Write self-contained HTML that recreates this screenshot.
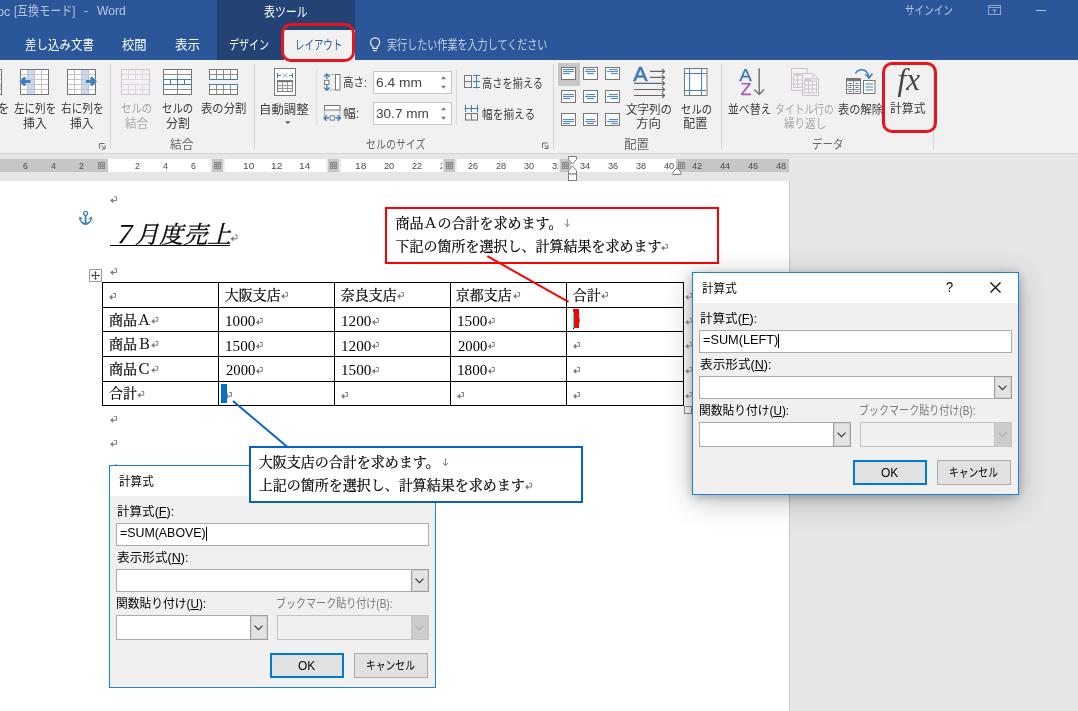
<!DOCTYPE html>
<html lang="ja">
<head>
<meta charset="utf-8">
<title>Word - 計算式</title>
<style>
html,body{margin:0;padding:0;}
body{will-change:transform;width:1078px;height:711px;overflow:hidden;position:relative;background:#e6e6e6;
 font-family:"Liberation Sans","Noto Sans CJK JP",sans-serif;font-size:12px;color:#262626;}
.a{position:absolute;}
.t{position:absolute;white-space:nowrap;line-height:20px;height:20px;}
.t span{display:inline-block;transform-origin:0 50%;}
.t u{text-decoration:underline;text-underline-offset:1px;}
svg{position:absolute;overflow:visible;}
#title{left:0;top:0;width:1078px;height:60px;background:#2b579a;}
#ctx{left:217px;top:0;width:138px;height:60px;background:#234375;}
#tabsel{left:284px;top:30px;width:71px;height:30px;background:#f1f1f1;}
.redbox{position:absolute;border:3px solid #e8141e;box-sizing:border-box;}
#ribbon{left:0;top:60px;width:1078px;height:93px;background:#f1f1f1;border-bottom:1px solid #d6d6d6;}
.sep{position:absolute;width:1px;background:#d4d4d4;top:64px;height:85px;}
.sep2{position:absolute;width:1px;background:#dadada;top:70px;height:55px;}
.inp{position:absolute;background:#fff;border:1px solid #c6c6c6;box-sizing:border-box;}
#ruler{left:0;top:159px;width:789px;height:13px;background:#fff;}
.rg{position:absolute;top:0;height:13px;background:#c6c6c6;}
.rm{position:absolute;top:0;width:15px;height:13px;background:#e9e9e9;}
.rm i{position:absolute;left:2px;top:0;width:11px;height:13px;background:#c6c6c6;}
#page{left:0;top:181px;width:789px;height:530px;background:#fff;border-right:1px solid #c8c8c8;}
.doc{font-family:"Liberation Serif","Noto Serif CJK JP","Noto Serif CJK SC",serif;-webkit-text-stroke:.22px #000;}
.hl{position:absolute;height:1px;background:#000;}
.vl{position:absolute;width:1px;background:#000;}
.dlg{position:absolute;background:#f0f0f0;border:1px solid #1883d7;box-sizing:border-box;width:327px;height:223px;}
.sh{box-shadow:0 2px 9px rgba(0,0,0,.24),0 6px 28px rgba(0,0,0,.24);}
.dlg div{position:absolute;box-sizing:border-box;}
.dlg .tb{left:0;top:0;right:0;height:30px;background:#fff;}
.dlg .in{background:#fff;border:1px solid #ababab;}
.dlg .dis{border-color:#c4c4c4;background:#f0f0f0;}
.dlg .ddb{right:0;top:0;bottom:0;width:18px;border:1px solid #a0a0a0;margin:-1px;background:#e3e3e3;box-shadow:inset 0 0 0 1px #d4d4d4;}
.dlg .dis .ddb{border-color:#c4c4c4;background:#cccccc;box-shadow:none;}
.dlg .btn{background:#e1e1e1;border:1px solid #adadad;}
.dlg .ok{border:2px solid #0078d7;}
.callout{position:absolute;background:#fff;box-sizing:border-box;}
</style>
</head>
<body>
<div id="title" class="a"></div><div id="ctx" class="a"></div><div id="tabsel" class="a"></div>
<div id="ribbon" class="a"></div>
<div class="sep" style="left:110px"></div>
<div class="sep" style="left:254px"></div>
<div class="sep" style="left:553px"></div>
<div class="sep" style="left:721px"></div>
<div class="sep" style="left:933px"></div>
<div class="sep2" style="left:316px"></div>
<div class="sep2" style="left:456px"></div>
<div class="inp" style="left:373px;top:71px;width:79px;height:23px;"></div>
<div class="inp" style="left:373px;top:102px;width:79px;height:23px;"></div>
<svg class="a" style="left:0;top:0" width="1078" height="160" viewBox="0 0 1078 160"><rect x="-26.5" y="69.5" width="28" height="25" fill="#fff" stroke="none" stroke-width="1" /><rect x="-26.5" y="84.5" width="28" height="5" fill="#c5d9f0" stroke="none" stroke-width="1" /><line x1="-26.5" y1="74.5" x2="1.5" y2="74.5" stroke="#c3c3c3" stroke-width="1" /><line x1="-26.5" y1="79.5" x2="1.5" y2="79.5" stroke="#c3c3c3" stroke-width="1" /><line x1="-26.5" y1="84.5" x2="1.5" y2="84.5" stroke="#c3c3c3" stroke-width="1" /><line x1="-26.5" y1="89.5" x2="1.5" y2="89.5" stroke="#c3c3c3" stroke-width="1" /><line x1="-19.5" y1="69.5" x2="-19.5" y2="94.5" stroke="#c3c3c3" stroke-width="1" /><line x1="-12.5" y1="69.5" x2="-12.5" y2="94.5" stroke="#c3c3c3" stroke-width="1" /><line x1="-5.5" y1="69.5" x2="-5.5" y2="94.5" stroke="#c3c3c3" stroke-width="1" /><rect x="-26.5" y="69.5" width="28" height="25" fill="none" stroke="#747474" stroke-width="1" /><rect x="20.5" y="69.5" width="28" height="25" fill="#fff" stroke="none" stroke-width="1" /><rect x="27.5" y="69.5" width="7" height="25" fill="#c5d9f0" stroke="none" stroke-width="1" /><line x1="20.5" y1="74.5" x2="48.5" y2="74.5" stroke="#c3c3c3" stroke-width="1" /><line x1="20.5" y1="79.5" x2="48.5" y2="79.5" stroke="#c3c3c3" stroke-width="1" /><line x1="20.5" y1="84.5" x2="48.5" y2="84.5" stroke="#c3c3c3" stroke-width="1" /><line x1="20.5" y1="89.5" x2="48.5" y2="89.5" stroke="#c3c3c3" stroke-width="1" /><line x1="27.5" y1="69.5" x2="27.5" y2="94.5" stroke="#c3c3c3" stroke-width="1" /><line x1="34.5" y1="69.5" x2="34.5" y2="94.5" stroke="#c3c3c3" stroke-width="1" /><line x1="41.5" y1="69.5" x2="41.5" y2="94.5" stroke="#c3c3c3" stroke-width="1" /><rect x="20.5" y="69.5" width="28" height="25" fill="none" stroke="#747474" stroke-width="1" /><path d="M19.2 81.4 l5 -4.8 l2.2 2 l-1.500 1.100 h5.7 v3.400 h-5.7 l1.500 1.100 l-2.2 2 z" fill="#3f7ec1" stroke="#f3f3f3" stroke-width="1" paint-order="stroke" stroke-linejoin="round"/><rect x="67.5" y="69.5" width="28" height="25" fill="#fff" stroke="none" stroke-width="1" /><rect x="81.5" y="69.5" width="7" height="25" fill="#c5d9f0" stroke="none" stroke-width="1" /><line x1="67.5" y1="74.5" x2="95.5" y2="74.5" stroke="#c3c3c3" stroke-width="1" /><line x1="67.5" y1="79.5" x2="95.5" y2="79.5" stroke="#c3c3c3" stroke-width="1" /><line x1="67.5" y1="84.5" x2="95.5" y2="84.5" stroke="#c3c3c3" stroke-width="1" /><line x1="67.5" y1="89.5" x2="95.5" y2="89.5" stroke="#c3c3c3" stroke-width="1" /><line x1="74.5" y1="69.5" x2="74.5" y2="94.5" stroke="#c3c3c3" stroke-width="1" /><line x1="81.5" y1="69.5" x2="81.5" y2="94.5" stroke="#c3c3c3" stroke-width="1" /><line x1="88.5" y1="69.5" x2="88.5" y2="94.5" stroke="#c3c3c3" stroke-width="1" /><rect x="67.5" y="69.5" width="28" height="25" fill="none" stroke="#747474" stroke-width="1" /><path d="M97 81.4 l-5 -4.8 l-2.2 2 l1.500 1.100 h-5.7 v3.400 h5.7 l-1.500 1.100 l2.2 2 z" fill="#3f7ec1" stroke="#f3f3f3" stroke-width="1" paint-order="stroke" stroke-linejoin="round"/><path d="M99.5 148.5 v-5 h5" fill="none" stroke="#6a6a6a" stroke-width="1" /><path d="M101.5 145.5 l3 3 M105 145.5 v3.5 h-3.5" fill="none" stroke="#6a6a6a" stroke-width="1" /><rect x="121.5" y="69.5" width="28" height="25" fill="#f6f0f6" stroke="none" stroke-width="1" /><line x1="121.5" y1="74.5" x2="149.5" y2="74.5" stroke="#dcd5dc" stroke-width="1" /><line x1="121.5" y1="79.5" x2="149.5" y2="79.5" stroke="#dcd5dc" stroke-width="1" /><line x1="121.5" y1="84.5" x2="149.5" y2="84.5" stroke="#dcd5dc" stroke-width="1" /><line x1="121.5" y1="89.5" x2="149.5" y2="89.5" stroke="#dcd5dc" stroke-width="1" /><line x1="128.5" y1="69.5" x2="128.5" y2="74.5" stroke="#dcd5dc" stroke-width="1" /><line x1="128.5" y1="74.5" x2="128.5" y2="79.5" stroke="#dcd5dc" stroke-width="1" /><line x1="128.5" y1="84.5" x2="128.5" y2="89.5" stroke="#dcd5dc" stroke-width="1" /><line x1="128.5" y1="89.5" x2="128.5" y2="94.5" stroke="#dcd5dc" stroke-width="1" /><line x1="135.5" y1="69.5" x2="135.5" y2="74.5" stroke="#dcd5dc" stroke-width="1" /><line x1="135.5" y1="74.5" x2="135.5" y2="79.5" stroke="#dcd5dc" stroke-width="1" /><line x1="135.5" y1="84.5" x2="135.5" y2="89.5" stroke="#dcd5dc" stroke-width="1" /><line x1="135.5" y1="89.5" x2="135.5" y2="94.5" stroke="#dcd5dc" stroke-width="1" /><line x1="142.5" y1="69.5" x2="142.5" y2="74.5" stroke="#dcd5dc" stroke-width="1" /><line x1="142.5" y1="74.5" x2="142.5" y2="79.5" stroke="#dcd5dc" stroke-width="1" /><line x1="142.5" y1="84.5" x2="142.5" y2="89.5" stroke="#dcd5dc" stroke-width="1" /><line x1="142.5" y1="89.5" x2="142.5" y2="94.5" stroke="#dcd5dc" stroke-width="1" /><rect x="121.5" y="69.5" width="28" height="25" fill="none" stroke="#cdc6cd" stroke-width="1" /><rect x="163.5" y="69.5" width="28" height="25" fill="#fff" stroke="none" stroke-width="1" /><line x1="163.5" y1="74.5" x2="191.5" y2="74.5" stroke="#8c8c8c" stroke-width="1" /><line x1="163.5" y1="79.5" x2="191.5" y2="79.5" stroke="#8c8c8c" stroke-width="1" /><line x1="163.5" y1="84.5" x2="191.5" y2="84.5" stroke="#8c8c8c" stroke-width="1" /><line x1="163.5" y1="89.5" x2="191.5" y2="89.5" stroke="#8c8c8c" stroke-width="1" /><line x1="177.5" y1="69.5" x2="177.5" y2="94.5" stroke="#8c8c8c" stroke-width="1" /><rect x="163.5" y="69.5" width="28" height="25" fill="none" stroke="#747474" stroke-width="1" /><rect x="163.5" y="79.5" width="28" height="5" fill="#fff" stroke="#3f7ec1" stroke-width="1" /><line x1="170.5" y1="79.5" x2="170.5" y2="84.5" stroke="#3f7ec1" stroke-width="1" /><line x1="177.5" y1="79.5" x2="177.5" y2="84.5" stroke="#3f7ec1" stroke-width="1" /><line x1="184.5" y1="79.5" x2="184.5" y2="84.5" stroke="#3f7ec1" stroke-width="1" /><rect x="209.5" y="69.5" width="28" height="10" fill="#fff" stroke="none" stroke-width="1" /><line x1="209.5" y1="74.5" x2="237.5" y2="74.5" stroke="#8c8c8c" stroke-width="1" /><line x1="216.5" y1="69.5" x2="216.5" y2="79.5" stroke="#8c8c8c" stroke-width="1" /><line x1="223.5" y1="69.5" x2="223.5" y2="79.5" stroke="#8c8c8c" stroke-width="1" /><line x1="230.5" y1="69.5" x2="230.5" y2="79.5" stroke="#8c8c8c" stroke-width="1" /><rect x="209.5" y="69.5" width="28" height="10" fill="none" stroke="#747474" stroke-width="1" /><line x1="209" y1="79.5" x2="238" y2="79.5" stroke="#3f7ec1" stroke-width="1" /><rect x="209.5" y="84.5" width="28" height="10" fill="#fff" stroke="none" stroke-width="1" /><line x1="209.5" y1="89.5" x2="237.5" y2="89.5" stroke="#8c8c8c" stroke-width="1" /><line x1="216.5" y1="84.5" x2="216.5" y2="94.5" stroke="#8c8c8c" stroke-width="1" /><line x1="223.5" y1="84.5" x2="223.5" y2="94.5" stroke="#8c8c8c" stroke-width="1" /><line x1="230.5" y1="84.5" x2="230.5" y2="94.5" stroke="#8c8c8c" stroke-width="1" /><rect x="209.5" y="84.5" width="28" height="10" fill="none" stroke="#747474" stroke-width="1" /><line x1="209" y1="84.5" x2="238" y2="84.5" stroke="#3f7ec1" stroke-width="1" /><rect x="274.5" y="68.5" width="21" height="27" fill="#fff" stroke="#7a7a7a" stroke-width="1" /><path d="M277.5 73v5M277.5 75.5h3.5M292.5 73v5M292.5 75.5h-3.5" fill="none" stroke="#3f7ec1" stroke-width="1" /><path d="M282.7 73.2l4.6 4.6M287.3 73.2l-4.6 4.6" fill="none" stroke="#9a9a9a" stroke-width="0.9" /><rect x="277" y="80" width="16" height="2.2" fill="#767676" stroke="none" stroke-width="1" /><rect x="277.5" y="80.5" width="15" height="11" fill="none" stroke="#7d7d7d" stroke-width="1" /><path d="M282.5 82v9.5M287.5 82v9.5M277.5 85.5h15M277.5 88.5h15" fill="none" stroke="#9a9a9a" stroke-width="1" /><path d="M285 121.2h5.6l-2.8 3z" fill="#666" stroke="none" stroke-width="1" /><rect x="335.5" y="74.5" width="4.5" height="15.5" fill="#fff" stroke="#777" stroke-width="1" /><line x1="329.5" y1="74.5" x2="335" y2="74.5" stroke="#777" stroke-width="1" stroke-dasharray="1 1"/><line x1="329.5" y1="90" x2="335" y2="90" stroke="#777" stroke-width="1" stroke-dasharray="1 1"/><rect x="324.5" y="80.3" width="4.4" height="4.2" fill="#fff" stroke="#777" stroke-width="1" /><path d="M326.8 74v5M324 76.8l2.8 -2.8l2.8 2.8M326.8 90.3v-5M324 87.5l2.8 2.8l2.8 -2.8" fill="none" stroke="#3f7ec1" stroke-width="1.4" /><rect x="324.5" y="105.5" width="15.5" height="4.5" fill="#fff" stroke="#777" stroke-width="1" /><line x1="324.5" y1="110.5" x2="324.5" y2="116" stroke="#777" stroke-width="1" stroke-dasharray="1 1"/><line x1="340" y1="110.5" x2="340" y2="116" stroke="#777" stroke-width="1" stroke-dasharray="1 1"/><rect x="330.1" y="115.9" width="4.2" height="4.2" fill="#fff" stroke="#777" stroke-width="1" /><path d="M324 118h5M326.8 115.2l-2.8 2.8l2.8 2.8M340.4 118h-5M337.6 115.2l2.8 2.8l-2.8 2.8" fill="none" stroke="#3f7ec1" stroke-width="1.4" /><path d="M441 79.3h5l-2.5 -3z" fill="#777" stroke="none" stroke-width="1" /><path d="M441 85.8h5l-2.5 3z" fill="#777" stroke="none" stroke-width="1" /><path d="M441 110.3h5l-2.5 -3z" fill="#777" stroke="none" stroke-width="1" /><path d="M441 116.8h5l-2.5 3z" fill="#777" stroke="none" stroke-width="1" /><rect x="464.5" y="75.5" width="7" height="12" fill="none" stroke="#777" stroke-width="1" /><line x1="464.5" y1="81.5" x2="471.5" y2="81.5" stroke="#777" stroke-width="1" /><path d="M476.5 74.5v14M473 75.5h7M473 81.5h7M473 87.5h7" fill="none" stroke="#3f7ec1" stroke-width="1" /><path d="M464.5 108.5h14M465.5 105v7M471.5 105v7M477.5 105v7" fill="none" stroke="#3f7ec1" stroke-width="1" /><rect x="465.5" y="113.5" width="12" height="6.5" fill="none" stroke="#777" stroke-width="1" /><line x1="471.5" y1="113.5" x2="471.5" y2="120" stroke="#777" stroke-width="1" /><path d="M542.5 148 v-5 h5" fill="none" stroke="#6a6a6a" stroke-width="1" /><path d="M544.5 145 l3 3 M548 145 v3.5 h-3.5" fill="none" stroke="#6a6a6a" stroke-width="1" /><rect x="558" y="63" width="22" height="23" fill="#c6c6c6" stroke="none" stroke-width="1" /><rect x="561.5" y="67.5" width="14" height="12" fill="#fff" stroke="#767676" stroke-width="1" /><rect x="563" y="69.1" width="11" height="1" fill="#3f7ec1" stroke="none" stroke-width="1" /><rect x="563" y="71.1" width="11" height="1" fill="#3f7ec1" stroke="none" stroke-width="1" /><rect x="563" y="73.1" width="7" height="1" fill="#3f7ec1" stroke="none" stroke-width="1" /><rect x="583.5" y="67.5" width="14" height="12" fill="#fff" stroke="#767676" stroke-width="1" /><rect x="586" y="69.1" width="9" height="1" fill="#3f7ec1" stroke="none" stroke-width="1" /><rect x="585" y="71.1" width="11" height="1" fill="#3f7ec1" stroke="none" stroke-width="1" /><rect x="587" y="73.1" width="7" height="1" fill="#3f7ec1" stroke="none" stroke-width="1" /><rect x="605.5" y="67.5" width="14" height="12" fill="#fff" stroke="#767676" stroke-width="1" /><rect x="609" y="69.1" width="9" height="1" fill="#3f7ec1" stroke="none" stroke-width="1" /><rect x="607" y="71.1" width="11" height="1" fill="#3f7ec1" stroke="none" stroke-width="1" /><rect x="611" y="73.1" width="7" height="1" fill="#3f7ec1" stroke="none" stroke-width="1" /><rect x="561.5" y="90.5" width="14" height="12" fill="#fff" stroke="#767676" stroke-width="1" /><rect x="563" y="94.1" width="11" height="1" fill="#3f7ec1" stroke="none" stroke-width="1" /><rect x="563" y="96.1" width="11" height="1" fill="#3f7ec1" stroke="none" stroke-width="1" /><rect x="563" y="98.1" width="7" height="1" fill="#3f7ec1" stroke="none" stroke-width="1" /><rect x="583.5" y="90.5" width="14" height="12" fill="#fff" stroke="#767676" stroke-width="1" /><rect x="586" y="94.1" width="9" height="1" fill="#3f7ec1" stroke="none" stroke-width="1" /><rect x="585" y="96.1" width="11" height="1" fill="#3f7ec1" stroke="none" stroke-width="1" /><rect x="587" y="98.1" width="7" height="1" fill="#3f7ec1" stroke="none" stroke-width="1" /><rect x="605.5" y="90.5" width="14" height="12" fill="#fff" stroke="#767676" stroke-width="1" /><rect x="609" y="94.1" width="9" height="1" fill="#3f7ec1" stroke="none" stroke-width="1" /><rect x="607" y="96.1" width="11" height="1" fill="#3f7ec1" stroke="none" stroke-width="1" /><rect x="611" y="98.1" width="7" height="1" fill="#3f7ec1" stroke="none" stroke-width="1" /><rect x="561.5" y="113.5" width="14" height="12" fill="#fff" stroke="#767676" stroke-width="1" /><rect x="563" y="119.1" width="11" height="1" fill="#3f7ec1" stroke="none" stroke-width="1" /><rect x="563" y="121.1" width="11" height="1" fill="#3f7ec1" stroke="none" stroke-width="1" /><rect x="563" y="123.1" width="7" height="1" fill="#3f7ec1" stroke="none" stroke-width="1" /><rect x="583.5" y="113.5" width="14" height="12" fill="#fff" stroke="#767676" stroke-width="1" /><rect x="586" y="119.1" width="9" height="1" fill="#3f7ec1" stroke="none" stroke-width="1" /><rect x="585" y="121.1" width="11" height="1" fill="#3f7ec1" stroke="none" stroke-width="1" /><rect x="587" y="123.1" width="7" height="1" fill="#3f7ec1" stroke="none" stroke-width="1" /><rect x="605.5" y="113.5" width="14" height="12" fill="#fff" stroke="#767676" stroke-width="1" /><rect x="609" y="119.1" width="9" height="1" fill="#3f7ec1" stroke="none" stroke-width="1" /><rect x="607" y="121.1" width="11" height="1" fill="#3f7ec1" stroke="none" stroke-width="1" /><rect x="611" y="123.1" width="7" height="1" fill="#3f7ec1" stroke="none" stroke-width="1" /><text x="633.2" y="80.9" font-family="Liberation Sans, sans-serif" font-size="21" fill="#3c78b9" stroke="#3c78b9" stroke-width=".55" textLength="14.3" lengthAdjust="spacingAndGlyphs">A</text><path d="M650 71.4H664.6M662 68.9l2.600 2.500l-2.600 2.500" fill="none" stroke="#666" stroke-width="1.15" /><path d="M650 77.4H664.6M662 74.9l2.600 2.500l-2.600 2.500" fill="none" stroke="#666" stroke-width="1.15" /><path d="M634 83.4H664.6M662 80.9l2.600 2.500l-2.600 2.500" fill="none" stroke="#666" stroke-width="1.15" /><path d="M634 89.5H664.6M662 87l2.600 2.500l-2.600 2.500" fill="none" stroke="#666" stroke-width="1.15" /><path d="M634 95.5H664.6M662 93l2.600 2.500l-2.600 2.500" fill="none" stroke="#666" stroke-width="1.15" /><rect x="684.5" y="68.5" width="22.5" height="27" fill="#fff" stroke="#777" stroke-width="1" /><path d="M689.6 69v26M701.6 69v26M685 73.5h21.5M685 90.5h21.5" fill="none" stroke="#3f7ec1" stroke-width="1" /><text x="739.3" y="80.6" font-family="Liberation Sans, sans-serif" font-size="16.5" fill="#3c78b9" stroke="#3c78b9" stroke-width=".25" textLength="12.6" lengthAdjust="spacingAndGlyphs">A</text><text x="740.5" y="95.4" font-family="Liberation Sans, sans-serif" font-size="16.5" fill="#a35bb5" stroke="#a35bb5" stroke-width=".25" textLength="11" lengthAdjust="spacingAndGlyphs">Z</text><path d="M759.2 68.2V94.300M754.2 89.5l5 5l5 -5" fill="none" stroke="#777" stroke-width="1.5" /><rect x="791.5" y="68.5" width="16" height="22" fill="#f6f1f6" stroke="#cbc5cb" stroke-width="1" /><rect x="793.5" y="73" width="8" height="3" fill="#d3ccd3" stroke="none" stroke-width="1" /><path d="M793.5 76v11.5h8M793.5 80h8M793.5 84h8M797.5 76v11.5" fill="none" stroke="#cbc5cb" stroke-width="1" /><path d="M802.5 73.5h10.5l5.5 5.5v16.500h-16z" fill="#f6f1f6" stroke="#cbc5cb" stroke-width="1" /><path d="M813 73.500v5.500h5.500" fill="none" stroke="#cbc5cb" stroke-width="1" /><rect x="804.5" y="78" width="7" height="3" fill="#d3ccd3" stroke="none" stroke-width="1" /><rect x="804.5" y="81" width="12" height="12" fill="none" stroke="#cbc5cb" stroke-width="1" /><path d="M804.500 85h12M804.5 89h12M808.5 81v12M812.5 81v12" fill="none" stroke="#cbc5cb" stroke-width="1" /><rect x="846" y="78" width="15" height="3.2" fill="#767676" stroke="none" stroke-width="1" /><rect x="846.5" y="78.5" width="14" height="15" fill="#fff" stroke="#767676" stroke-width="1" /><rect x="846" y="78" width="15" height="3.2" fill="#767676" stroke="none" stroke-width="1" /><path d="M853.5 81v12.500M846.500 85.500h14M846.5 89.500h14" fill="none" stroke="#8c8c8c" stroke-width="1" /><path d="M848.5 83.5h3M855.5 83.5h3" fill="none" stroke="#3f7ec1" stroke-width="1" /><path d="M848.5 87.5h3M855.5 87.5h3" fill="none" stroke="#3f7ec1" stroke-width="1" /><path d="M848.5 91.5h3M855.5 91.5h3" fill="none" stroke="#3f7ec1" stroke-width="1" /><rect x="863.5" y="80.5" width="11.5" height="13" fill="#fff" stroke="#767676" stroke-width="1" /><path d="M865.5 84h7.5M865.5 87h7.5M865.5 90h7.5" fill="none" stroke="#3f7ec1" stroke-width="1" /><path d="M855.5 73.500c3 -5.500 11.500 -5.500 13.500 3.500" fill="none" stroke="#3f7ec1" stroke-width="1.5" /><path d="M865.300 74l3.700 4l3.500 -4.500" fill="none" stroke="#3f7ec1" stroke-width="1.5" /><text x="897.5" y="90" font-family="Liberation Serif, serif" font-style="italic" font-size="31" fill="#444" textLength="22.5" lengthAdjust="spacingAndGlyphs">fx</text><path d="M373 48.300v-1.600c-1.700 -1.200 -2.500 -2.600 -2.500 -4.300a4.600 4.600 0 0 1 9.200 0c0 1.700 -.8 3.100 -2.500 4.300v1.600zM373.300 50.600h3.600" fill="none" stroke="#f0f3f9" stroke-width="1.25" /><rect x="988.5" y="5.5" width="12" height="9" fill="none" stroke="#8fa4cb" stroke-width="1" /><line x1="988.5" y1="7.5" x2="1000.5" y2="7.5" stroke="#8fa4cb" stroke-width="1" /><path d="M994.500 13.500v-4M992.500 11l2 -2l2 2" fill="none" stroke="#8fa4cb" stroke-width="1" /><line x1="1036" y1="10.5" x2="1046" y2="10.5" stroke="#b9c6de" stroke-width="1" /></svg>
<div class="redbox" style="left:281px;top:23px;width:74px;height:39px;border-radius:10px;"></div>
<div class="redbox" style="left:882px;top:62px;width:55px;height:71px;border-radius:10px;"></div>
<div id="ruler" class="a"><div class="rg" style="left:0;width:108px"></div><div class="rg" style="left:677px;width:112px"></div></div>
<div id="page" class="a"></div>
<div class="hl" style="left:102px;top:282px;width:582px"></div>
<div class="hl" style="left:102px;top:307px;width:582px"></div>
<div class="hl" style="left:102px;top:331px;width:582px"></div>
<div class="hl" style="left:102px;top:356px;width:582px"></div>
<div class="hl" style="left:102px;top:381px;width:582px"></div>
<div class="hl" style="left:102px;top:405px;width:582px"></div>
<div class="vl" style="left:102px;top:282px;height:124px"></div>
<div class="vl" style="left:218px;top:282px;height:124px"></div>
<div class="vl" style="left:334px;top:282px;height:124px"></div>
<div class="vl" style="left:450px;top:282px;height:124px"></div>
<div class="vl" style="left:566px;top:282px;height:124px"></div>
<div class="vl" style="left:683px;top:282px;height:124px"></div>
<svg class="a" style="left:0;top:0" width="1078" height="711" viewBox="0 0 1078 711"><circle cx="85.6" cy="213.3" r="2" fill="#fff" stroke="#3f7ec1" stroke-width="1.3"/><path d="M85.600 215.500v8.500" fill="none" stroke="#3f7ec1" stroke-width="1.8" /><path d="M79.300 217.800C79.800 222.300 82.500 225 85.600 225C88.700 225 91.400 222.300 91.900 217.800L90.200 219.800C89.500 221.600 87.900 222.700 85.600 222.700C83.300 222.700 81.700 221.600 81 219.800Z" fill="#3f7ec1" stroke="none" stroke-width="1" /><path d="M78.800 219.800l.9 -3.600l2.900 2.600zM92.400 219.800l-.9 -3.600l-2.900 2.600z" fill="#3f7ec1" stroke="none" stroke-width="1" /><rect x="89.5" y="269.5" width="12" height="12" fill="#fff" stroke="#9b9b9b" stroke-width="1" /><path d="M95.500 271.500v8M91.500 275.500h8" fill="none" stroke="#4a4a4a" stroke-width="1" /><path d="M94 273l1.500 -1.700l1.500 1.700zM94 278l1.500 1.700l1.500 -1.700zM93 274l-1.700 1.500l1.700 1.500zM98 274l1.700 1.500l-1.700 1.500z" fill="#4a4a4a" stroke="none" stroke-width="1" /><path d="M115 464.800h1.500v4h-5" fill="none" stroke="#7f7f7f" stroke-width="1" /><rect x="684.5" y="406.5" width="7" height="7" fill="#fff" stroke="#8f8f8f" stroke-width="1" /></svg>
<div class="callout" style="left:385px;top:207px;width:334px;height:57px;border:2px solid #ff0000;"></div>
<div class="a" style="left:110px;top:245px;width:120px;height:1.3px;background:#000"></div>
<div class="dlg sh" style="left:692px;top:272px;"><div class="tb"></div><svg style="left:297px;top:9px" width="11" height="11" viewBox="0 0 11 11"><path d="M.5 .5l10 10M10.500 .5l-10 10" fill="none" stroke="#000" stroke-width="1.15"/></svg><div class="in" style="left:6px;top:57px;width:313px;height:23px"></div><div style="left:84.8px;top:61px;width:1px;height:14px;background:#000"></div><div class="in" style="left:6px;top:103px;width:313px;height:23px"><div class="ddb"><svg style="left:2.5px;top:8px" width="9" height="6" viewBox="0 0 9 6"><path d="M.5 .6l4 4l4 -4" fill="none" stroke="#333" stroke-width="1.1"/></svg></div></div><div class="in" style="left:6px;top:149px;width:152px;height:25px"><div class="ddb"><svg style="left:2.5px;top:9px" width="9" height="6" viewBox="0 0 9 6"><path d="M.5 .6l4 4l4 -4" fill="none" stroke="#333" stroke-width="1.1"/></svg></div></div><div class="in dis" style="left:167px;top:149px;width:152px;height:25px"><div class="ddb"><svg style="left:2.5px;top:9px" width="9" height="6" viewBox="0 0 9 6"><path d="M.5 .6l4 4l4 -4" fill="none" stroke="#b0b0b0" stroke-width="1.1"/></svg></div></div><div class="btn ok" style="left:160px;top:187px;width:74px;height:25px"></div><div class="btn" style="left:244px;top:187px;width:74px;height:25px"></div></div>
<div class="dlg" style="left:109px;top:465px;"><div class="tb"></div><div class="in" style="left:6px;top:57px;width:313px;height:23px"></div><div style="left:95.8px;top:61px;width:1px;height:14px;background:#000"></div><div class="in" style="left:6px;top:103px;width:313px;height:23px"><div class="ddb"><svg style="left:2.5px;top:8px" width="9" height="6" viewBox="0 0 9 6"><path d="M.5 .6l4 4l4 -4" fill="none" stroke="#333" stroke-width="1.1"/></svg></div></div><div class="in" style="left:6px;top:149px;width:152px;height:25px"><div class="ddb"><svg style="left:2.5px;top:9px" width="9" height="6" viewBox="0 0 9 6"><path d="M.5 .6l4 4l4 -4" fill="none" stroke="#333" stroke-width="1.1"/></svg></div></div><div class="in dis" style="left:167px;top:149px;width:152px;height:25px"><div class="ddb"><svg style="left:2.5px;top:9px" width="9" height="6" viewBox="0 0 9 6"><path d="M.5 .6l4 4l4 -4" fill="none" stroke="#b0b0b0" stroke-width="1.1"/></svg></div></div><div class="btn ok" style="left:160px;top:187px;width:74px;height:25px"></div><div class="btn" style="left:244px;top:187px;width:74px;height:25px"></div></div>
<div class="callout" style="left:249px;top:446px;width:334px;height:57px;border:2px solid #0563c1;"></div>
<svg class="a" style="left:0;top:0" width="1078" height="711" viewBox="0 0 1078 711"><path d="M114.2 196.8h2.300v3.800h-4.500" fill="none" stroke="#7f7f7f" stroke-width="1" /><path d="M110 200.6l3.200 -2.700v5.400z" fill="#7f7f7f" stroke="none" stroke-width="1" /><path d="M234.7 235h2.300v3.800h-4.500" fill="none" stroke="#7f7f7f" stroke-width="1" /><path d="M230.5 238.8l3.200 -2.700v5.400z" fill="#7f7f7f" stroke="none" stroke-width="1" /><path d="M114.2 268.7h2.300v3.800h-4.500" fill="none" stroke="#7f7f7f" stroke-width="1" /><path d="M110 272.5l3.200 -2.700v5.400z" fill="#7f7f7f" stroke="none" stroke-width="1" /><path d="M114.2 416.5h2.300v3.800h-4.500" fill="none" stroke="#7f7f7f" stroke-width="1" /><path d="M110 420.3l3.200 -2.700v5.400z" fill="#7f7f7f" stroke="none" stroke-width="1" /><path d="M114.2 440.5h2.300v3.800h-4.500" fill="none" stroke="#7f7f7f" stroke-width="1" /><path d="M110 444.3l3.200 -2.700v5.400z" fill="#7f7f7f" stroke="none" stroke-width="1" /><path d="M113.2 293.5h2.300v3.800h-4.500" fill="none" stroke="#7f7f7f" stroke-width="1" /><path d="M109 297.3l3.200 -2.700v5.400z" fill="#7f7f7f" stroke="none" stroke-width="1" /><path d="M285.2 292.4h2.300v3.800h-4.500" fill="none" stroke="#7f7f7f" stroke-width="1" /><path d="M281 296.2l3.200 -2.700v5.400z" fill="#7f7f7f" stroke="none" stroke-width="1" /><path d="M401.2 292.4h2.300v3.800h-4.500" fill="none" stroke="#7f7f7f" stroke-width="1" /><path d="M397 296.2l3.200 -2.700v5.400z" fill="#7f7f7f" stroke="none" stroke-width="1" /><path d="M517.2 292.4h2.300v3.800h-4.500" fill="none" stroke="#7f7f7f" stroke-width="1" /><path d="M513 296.2l3.200 -2.700v5.400z" fill="#7f7f7f" stroke="none" stroke-width="1" /><path d="M605.2 292.4h2.300v3.800h-4.500" fill="none" stroke="#7f7f7f" stroke-width="1" /><path d="M601 296.2l3.200 -2.700v5.400z" fill="#7f7f7f" stroke="none" stroke-width="1" /><path d="M155.4 317.4h2.300v3.800h-4.500" fill="none" stroke="#7f7f7f" stroke-width="1" /><path d="M151.2 321.2l3.200 -2.700v5.400z" fill="#7f7f7f" stroke="none" stroke-width="1" /><path d="M260 318.5h2.300v3.800h-4.500" fill="none" stroke="#7f7f7f" stroke-width="1" /><path d="M255.8 322.3l3.200 -2.700v5.400z" fill="#7f7f7f" stroke="none" stroke-width="1" /><path d="M376 318.5h2.300v3.800h-4.500" fill="none" stroke="#7f7f7f" stroke-width="1" /><path d="M371.8 322.3l3.200 -2.700v5.400z" fill="#7f7f7f" stroke="none" stroke-width="1" /><path d="M492 318.5h2.300v3.800h-4.500" fill="none" stroke="#7f7f7f" stroke-width="1" /><path d="M487.8 322.3l3.200 -2.700v5.400z" fill="#7f7f7f" stroke="none" stroke-width="1" /><path d="M577.2 318.5h2.300v3.800h-4.500" fill="none" stroke="#7f7f7f" stroke-width="1" /><path d="M573 322.3l3.200 -2.700v5.400z" fill="#7f7f7f" stroke="none" stroke-width="1" /><path d="M155.4 341.4h2.300v3.800h-4.500" fill="none" stroke="#7f7f7f" stroke-width="1" /><path d="M151.2 345.2l3.200 -2.700v5.400z" fill="#7f7f7f" stroke="none" stroke-width="1" /><path d="M260 342.5h2.300v3.800h-4.500" fill="none" stroke="#7f7f7f" stroke-width="1" /><path d="M255.8 346.3l3.200 -2.700v5.400z" fill="#7f7f7f" stroke="none" stroke-width="1" /><path d="M376 342.5h2.300v3.800h-4.500" fill="none" stroke="#7f7f7f" stroke-width="1" /><path d="M371.8 346.3l3.200 -2.700v5.400z" fill="#7f7f7f" stroke="none" stroke-width="1" /><path d="M492 342.5h2.300v3.800h-4.500" fill="none" stroke="#7f7f7f" stroke-width="1" /><path d="M487.8 346.3l3.200 -2.700v5.400z" fill="#7f7f7f" stroke="none" stroke-width="1" /><path d="M577.2 342.5h2.300v3.800h-4.500" fill="none" stroke="#7f7f7f" stroke-width="1" /><path d="M573 346.3l3.200 -2.700v5.400z" fill="#7f7f7f" stroke="none" stroke-width="1" /><path d="M155.4 366.4h2.300v3.800h-4.500" fill="none" stroke="#7f7f7f" stroke-width="1" /><path d="M151.2 370.2l3.200 -2.700v5.400z" fill="#7f7f7f" stroke="none" stroke-width="1" /><path d="M260 367.5h2.300v3.800h-4.500" fill="none" stroke="#7f7f7f" stroke-width="1" /><path d="M255.8 371.3l3.200 -2.700v5.400z" fill="#7f7f7f" stroke="none" stroke-width="1" /><path d="M376 367.5h2.300v3.800h-4.500" fill="none" stroke="#7f7f7f" stroke-width="1" /><path d="M371.8 371.3l3.200 -2.700v5.400z" fill="#7f7f7f" stroke="none" stroke-width="1" /><path d="M492 367.5h2.300v3.800h-4.500" fill="none" stroke="#7f7f7f" stroke-width="1" /><path d="M487.8 371.3l3.200 -2.700v5.400z" fill="#7f7f7f" stroke="none" stroke-width="1" /><path d="M577.2 367.5h2.300v3.800h-4.500" fill="none" stroke="#7f7f7f" stroke-width="1" /><path d="M573 371.3l3.200 -2.700v5.400z" fill="#7f7f7f" stroke="none" stroke-width="1" /><path d="M141.4 391.4h2.300v3.800h-4.500" fill="none" stroke="#7f7f7f" stroke-width="1" /><path d="M137.2 395.2l3.200 -2.700v5.400z" fill="#7f7f7f" stroke="none" stroke-width="1" /><path d="M229.2 392.5h2.300v3.800h-4.500" fill="none" stroke="#7f7f7f" stroke-width="1" /><path d="M225 396.3l3.200 -2.700v5.400z" fill="#7f7f7f" stroke="none" stroke-width="1" /><path d="M345.2 392.5h2.300v3.800h-4.500" fill="none" stroke="#7f7f7f" stroke-width="1" /><path d="M341 396.3l3.200 -2.700v5.400z" fill="#7f7f7f" stroke="none" stroke-width="1" /><path d="M461.2 392.5h2.300v3.800h-4.500" fill="none" stroke="#7f7f7f" stroke-width="1" /><path d="M457 396.3l3.200 -2.700v5.400z" fill="#7f7f7f" stroke="none" stroke-width="1" /><path d="M577.2 392.5h2.300v3.800h-4.500" fill="none" stroke="#7f7f7f" stroke-width="1" /><path d="M573 396.3l3.200 -2.700v5.400z" fill="#7f7f7f" stroke="none" stroke-width="1" /><path d="M689.4 293.4h2.300v3.800h-4.500" fill="none" stroke="#7f7f7f" stroke-width="1" /><path d="M685.2 297.2l3.200 -2.700v5.400z" fill="#7f7f7f" stroke="none" stroke-width="1" /><path d="M689.4 318.4h2.300v3.800h-4.500" fill="none" stroke="#7f7f7f" stroke-width="1" /><path d="M685.2 322.2l3.200 -2.700v5.400z" fill="#7f7f7f" stroke="none" stroke-width="1" /><path d="M689.4 342.4h2.300v3.800h-4.500" fill="none" stroke="#7f7f7f" stroke-width="1" /><path d="M685.2 346.2l3.200 -2.700v5.400z" fill="#7f7f7f" stroke="none" stroke-width="1" /><path d="M689.4 367.4h2.300v3.800h-4.500" fill="none" stroke="#7f7f7f" stroke-width="1" /><path d="M685.2 371.2l3.200 -2.700v5.400z" fill="#7f7f7f" stroke="none" stroke-width="1" /><path d="M689.4 392.4h2.300v3.800h-4.500" fill="none" stroke="#7f7f7f" stroke-width="1" /><path d="M685.2 396.2l3.200 -2.700v5.400z" fill="#7f7f7f" stroke="none" stroke-width="1" /><path d="M567.3 219v7.500M564.8 223.7l2.500 2.800l2.500 -2.800" fill="none" stroke="#7f7f7f" stroke-width="1" /><path d="M665.2 244.3h2.300v3.800h-4.500" fill="none" stroke="#7f7f7f" stroke-width="1" /><path d="M661 248.1l3.200 -2.700v5.400z" fill="#7f7f7f" stroke="none" stroke-width="1" /><path d="M445.5 458.2v7.500M443 462.9l2.500 2.800l2.500 -2.800" fill="none" stroke="#7f7f7f" stroke-width="1" /><path d="M529.2 483.3h2.300v3.800h-4.500" fill="none" stroke="#7f7f7f" stroke-width="1" /><path d="M525 487.1l3.200 -2.700v5.400z" fill="#7f7f7f" stroke="none" stroke-width="1" /></svg>
<svg style="left:0;top:0" width="1078" height="711"><line x1="487.300" y1="256.200" x2="568.500" y2="301.800" stroke="#ff0000" stroke-width="2"/><line x1="233" y1="401" x2="288" y2="447.500" stroke="#0563c1" stroke-width="2"/></svg>
<div class="a" style="left:573px;top:309px;width:6px;height:19px;background:#ff0000"></div>
<div class="a" style="left:573px;top:312px;width:1px;height:16px;background:#00ffff"></div>
<div class="a" style="left:573px;top:328px;width:1px;height:1px;background:#000"></div>
<div class="a" style="left:221px;top:384px;width:6px;height:19px;background:#0070c8"></div>
<div class="t" style="left:-3.00px;top:2.00px;font-size:13px;color:#b6c4de;"><span style="transform:scaleX(0.9692)">oc</span></div>
<div class="t" style="left:14.15px;top:1.00px;font-size:13px;color:#b6c4de;"><span style="transform:scaleX(0.8486)">[互換モード]</span></div>
<div class="t" style="left:84.00px;top:1.00px;font-size:13px;color:#b6c4de;"><span style="transform:scaleX(0.9500)">-</span></div>
<div class="t" style="left:97.00px;top:1.00px;font-size:13px;color:#b6c4de;"><span style="transform:scaleX(0.9333)">Word</span></div>
<div class="t" style="left:263.66px;top:2.00px;font-size:13px;color:#ffffff;"><span style="transform:scaleX(0.8400)">表ツール</span></div>
<div class="t" style="left:904.90px;top:1.00px;font-size:12px;color:#b6c4de;"><span style="transform:scaleX(0.7983)">サインイン</span></div>
<div class="t" style="left:25.02px;top:35.00px;font-size:13px;color:#ffffff;"><span style="transform:scaleX(0.8829)">差し込み文書</span></div>
<div class="t" style="left:122.20px;top:35.00px;font-size:13px;color:#ffffff;"><span style="transform:scaleX(0.9440)">校閲</span></div>
<div class="t" style="left:174.83px;top:35.00px;font-size:13px;color:#ffffff;"><span style="transform:scaleX(0.9667)">表示</span></div>
<div class="t" style="left:229.23px;top:35.00px;font-size:13px;color:#ffffff;"><span style="transform:scaleX(0.7700)">デザイン</span></div>
<div class="t" style="left:295.42px;top:35.00px;font-size:13px;color:#2b579a;"><span style="transform:scaleX(0.7267)">レイアウト</span></div>
<div class="t" style="left:387.03px;top:35.00px;font-size:13px;color:#c6d1e6;"><span style="transform:scaleX(0.7741)">実行したい作業を入力してください</span></div>
<div class="t" style="left:-2.64px;top:99.00px;font-size:12px;color:#3a3a3a;"><span style="transform:scaleX(1.0400)">を</span></div>
<div class="t" style="left:14.20px;top:99.00px;font-size:12px;color:#3a3a3a;"><span style="transform:scaleX(0.8787)">左に列を</span></div>
<div class="t" style="left:22.80px;top:114.00px;font-size:12px;color:#3a3a3a;"><span style="transform:scaleX(0.9917)">挿入</span></div>
<div class="t" style="left:61.00px;top:99.00px;font-size:12px;color:#3a3a3a;"><span style="transform:scaleX(0.8894)">右に列を</span></div>
<div class="t" style="left:69.80px;top:114.00px;font-size:12px;color:#3a3a3a;"><span style="transform:scaleX(0.9833)">挿入</span></div>
<div class="t" style="left:120.63px;top:99.00px;font-size:12px;color:#a8a8a8;"><span style="transform:scaleX(0.8676)">セルの</span></div>
<div class="t" style="left:124.50px;top:114.00px;font-size:12px;color:#a8a8a8;"><span style="transform:scaleX(0.9708)">結合</span></div>
<div class="t" style="left:162.43px;top:99.00px;font-size:12px;color:#3a3a3a;"><span style="transform:scaleX(0.8676)">セルの</span></div>
<div class="t" style="left:166.00px;top:114.00px;font-size:12px;color:#3a3a3a;"><span>分割</span></div>
<div class="t" style="left:201.00px;top:99.00px;font-size:12px;color:#3a3a3a;"><span style="transform:scaleX(0.9447)">表の分割</span></div>
<div class="t" style="left:170.00px;top:135.00px;font-size:12px;color:#666666;"><span style="transform:scaleX(0.9833)">結合</span></div>
<div class="t" style="left:259.43px;top:100.00px;font-size:12px;color:#3a3a3a;"><span style="transform:scaleX(1.0326)">自動調整</span></div>
<div class="t" style="left:343.42px;top:73.00px;font-size:12px;color:#3a3a3a;"><span style="transform:scaleX(0.8800)">高さ:</span></div>
<div class="t" style="left:376.20px;top:73.00px;font-size:13px;color:#444;"><span style="transform:scaleX(1.0605)">6.4 mm</span></div>
<div class="t" style="left:342.83px;top:104.00px;font-size:12px;color:#3a3a3a;"><span style="transform:scaleX(1.0692)">幅:</span></div>
<div class="t" style="left:376.26px;top:104.00px;font-size:13px;color:#444;"><span style="transform:scaleX(1.0449)">30.7 mm</span></div>
<div class="t" style="left:482.35px;top:74.00px;font-size:12px;color:#3a3a3a;"><span style="transform:scaleX(0.8522)">高さを揃える</span></div>
<div class="t" style="left:482.31px;top:105.00px;font-size:12px;color:#3a3a3a;"><span style="transform:scaleX(0.8912)">幅を揃える</span></div>
<div class="t" style="left:365.67px;top:135.00px;font-size:12px;color:#666666;"><span style="transform:scaleX(0.8300)">セルのサイズ</span></div>
<div class="t" style="left:626.40px;top:100.00px;font-size:12px;color:#3a3a3a;"><span style="transform:scaleX(0.9596)">文字列の</span></div>
<div class="t" style="left:636.40px;top:114.00px;font-size:12px;color:#3a3a3a;"><span style="transform:scaleX(1.0348)">方向</span></div>
<div class="t" style="left:680.63px;top:100.00px;font-size:12px;color:#3a3a3a;"><span style="transform:scaleX(0.8676)">セルの</span></div>
<div class="t" style="left:682.99px;top:114.00px;font-size:12px;color:#3a3a3a;"><span style="transform:scaleX(1.0130)">配置</span></div>
<div class="t" style="left:623.96px;top:135.00px;font-size:12px;color:#666666;"><span style="transform:scaleX(1.0435)">配置</span></div>
<div class="t" style="left:728.30px;top:100.00px;font-size:12px;color:#3a3a3a;"><span style="transform:scaleX(0.9043)">並べ替え</span></div>
<div class="t" style="left:774.78px;top:100.00px;font-size:12px;color:#a8a8a8;"><span style="transform:scaleX(0.8157)">タイトル行の</span></div>
<div class="t" style="left:783.90px;top:114.00px;font-size:12px;color:#a8a8a8;"><span style="transform:scaleX(0.8787)">繰り返し</span></div>
<div class="t" style="left:838.20px;top:100.00px;font-size:12px;color:#3a3a3a;"><span style="transform:scaleX(0.9383)">表の解除</span></div>
<div class="t" style="left:890.20px;top:99.00px;font-size:12px;color:#3a3a3a;"><span style="transform:scaleX(0.9889)">計算式</span></div>
<div class="t" style="left:812.33px;top:135.00px;font-size:12px;color:#666666;"><span style="transform:scaleX(0.8727)">データ</span></div>
<div class="t" style="left:701.90px;top:279.00px;font-size:12px;color:#000;"><span style="transform:scaleX(0.9639)">計算式</span></div>
<div class="t" style="left:699.50px;top:309.00px;font-size:12px;color:#000;"><span style="transform:scaleX(1.0463)">計算式(<u>F</u>):</span></div>
<div class="t" style="left:703.20px;top:330.00px;font-size:12px;color:#000;"><span style="transform:scaleX(1.0600)">=SUM(LEFT)</span></div>
<div class="t" style="left:699.50px;top:355.00px;font-size:12px;color:#000;"><span style="transform:scaleX(1.0522)">表示形式(<u>N</u>):</span></div>
<div class="t" style="left:698.52px;top:401.00px;font-size:12px;color:#000;"><span style="transform:scaleX(0.9789)">関数貼り付け(<u>U</u>):</span></div>
<div class="t" style="left:859.46px;top:401.00px;font-size:12px;color:#7a7a7a;"><span style="transform:scaleX(0.8358)">ブックマーク貼り付け(B):</span></div>
<div class="t" style="left:880.90px;top:463.00px;font-size:12px;color:#000;"><span style="transform:scaleX(0.9941)">OK</span></div>
<div class="t" style="left:948.78px;top:463.00px;font-size:12px;color:#000;"><span style="transform:scaleX(0.8155)">キャンセル</span></div>
<div class="t" style="left:118.90px;top:472.00px;font-size:12px;color:#000;"><span style="transform:scaleX(0.9639)">計算式</span></div>
<div class="t" style="left:116.50px;top:502.00px;font-size:12px;color:#000;"><span style="transform:scaleX(1.0463)">計算式(<u>F</u>):</span></div>
<div class="t" style="left:120.20px;top:523.00px;font-size:12px;color:#000;"><span style="transform:scaleX(1.0317)">=SUM(ABOVE)</span></div>
<div class="t" style="left:116.50px;top:548.00px;font-size:12px;color:#000;"><span style="transform:scaleX(1.0522)">表示形式(<u>N</u>):</span></div>
<div class="t" style="left:115.52px;top:594.00px;font-size:12px;color:#000;"><span style="transform:scaleX(0.9789)">関数貼り付け(<u>U</u>):</span></div>
<div class="t" style="left:276.46px;top:594.00px;font-size:12px;color:#7a7a7a;"><span style="transform:scaleX(0.8358)">ブックマーク貼り付け(B):</span></div>
<div class="t" style="left:297.90px;top:656.00px;font-size:12px;color:#000;"><span style="transform:scaleX(0.9941)">OK</span></div>
<div class="t" style="left:365.78px;top:656.00px;font-size:12px;color:#000;"><span style="transform:scaleX(0.8155)">キャンセル</span></div>
<div class="t" style="left:946.08px;top:277.00px;font-size:14px;color:#000;"><span style="transform:scaleX(0.9167)">?</span></div>
<div class="t doc" style="left:224.80px;top:286.00px;font-size:14px;color:#000;"><span>大阪支店</span></div>
<div class="t doc" style="left:340.80px;top:286.00px;font-size:14px;color:#000;"><span>奈良支店</span></div>
<div class="t doc" style="left:455.80px;top:286.00px;font-size:14px;color:#000;"><span>京都支店</span></div>
<div class="t doc" style="left:572.80px;top:286.00px;font-size:14px;color:#000;"><span>合計</span></div>
<div class="t doc" style="left:109.00px;top:311.00px;font-size:14px;color:#000;"><span>商品Ａ</span></div>
<div class="t doc" style="left:225.09px;top:311.00px;font-size:15px;color:#000;-webkit-text-stroke:0;"><span style="transform:scaleX(1.0103)">1000</span></div>
<div class="t doc" style="left:341.09px;top:311.00px;font-size:15px;color:#000;-webkit-text-stroke:0;"><span style="transform:scaleX(1.0103)">1200</span></div>
<div class="t doc" style="left:457.09px;top:311.00px;font-size:15px;color:#000;-webkit-text-stroke:0;"><span style="transform:scaleX(1.0103)">1500</span></div>
<div class="t doc" style="left:109.00px;top:335.00px;font-size:14px;color:#000;"><span>商品Ｂ</span></div>
<div class="t doc" style="left:225.09px;top:336.00px;font-size:15px;color:#000;-webkit-text-stroke:0;"><span style="transform:scaleX(1.0103)">1500</span></div>
<div class="t doc" style="left:341.09px;top:336.00px;font-size:15px;color:#000;-webkit-text-stroke:0;"><span style="transform:scaleX(1.0103)">1200</span></div>
<div class="t doc" style="left:458.10px;top:336.00px;font-size:15px;color:#000;-webkit-text-stroke:0;"><span style="transform:scaleX(0.9767)">2000</span></div>
<div class="t doc" style="left:109.00px;top:360.00px;font-size:14px;color:#000;"><span>商品Ｃ</span></div>
<div class="t doc" style="left:226.10px;top:360.00px;font-size:15px;color:#000;-webkit-text-stroke:0;"><span style="transform:scaleX(0.9767)">2000</span></div>
<div class="t doc" style="left:341.09px;top:360.00px;font-size:15px;color:#000;-webkit-text-stroke:0;"><span style="transform:scaleX(1.0103)">1500</span></div>
<div class="t doc" style="left:457.09px;top:360.00px;font-size:15px;color:#000;-webkit-text-stroke:0;"><span style="transform:scaleX(1.0103)">1800</span></div>
<div class="t doc" style="left:109.00px;top:384.00px;font-size:14px;color:#000;"><span>合計</span></div>
<div class="t doc" style="left:111.29px;top:225.00px;font-size:24px;color:#000;font-style:italic;-webkit-text-stroke:.3px #000;"><span style="transform:scaleX(1.0018)">７月度売上</span></div>
<div class="t doc" style="left:395.60px;top:214.00px;font-size:14px;color:#000;"><span>商品Ａの合計を求めます。</span></div>
<div class="t doc" style="left:395.60px;top:237.00px;font-size:14px;color:#000;"><span>下記の箇所を選択し、計算結果を求めます</span></div>
<div class="t doc" style="left:258.80px;top:453.00px;font-size:14px;color:#000;"><span>大阪支店の合計を求めます。</span></div>
<div class="t doc" style="left:258.80px;top:476.00px;font-size:14px;color:#000;"><span>上記の箇所を選択し、計算結果を求めます</span></div>
<div class="t" style="left:22.70px;top:156.00px;font-size:9.5px;color:#4a4a4a;"><span style="transform:scaleX(0.9200)">6</span></div>
<div class="t" style="left:50.70px;top:156.00px;font-size:9.5px;color:#4a4a4a;"><span style="transform:scaleX(0.9200)">4</span></div>
<div class="t" style="left:78.70px;top:156.00px;font-size:9.5px;color:#4a4a4a;"><span style="transform:scaleX(0.9200)">2</span></div>
<div class="t" style="left:134.70px;top:156.00px;font-size:9.5px;color:#4a4a4a;"><span style="transform:scaleX(0.9200)">2</span></div>
<div class="t" style="left:162.70px;top:156.00px;font-size:9.5px;color:#4a4a4a;"><span style="transform:scaleX(0.9200)">4</span></div>
<div class="t" style="left:190.70px;top:156.00px;font-size:9.5px;color:#4a4a4a;"><span style="transform:scaleX(0.9200)">6</span></div>
<div class="t" style="left:243.13px;top:156.00px;font-size:9.5px;color:#4a4a4a;"><span style="transform:scaleX(1.0667)">10</span></div>
<div class="t" style="left:271.13px;top:156.00px;font-size:9.5px;color:#4a4a4a;"><span style="transform:scaleX(1.0667)">12</span></div>
<div class="t" style="left:299.13px;top:156.00px;font-size:9.5px;color:#4a4a4a;"><span style="transform:scaleX(1.0667)">14</span></div>
<div class="t" style="left:355.13px;top:156.00px;font-size:9.5px;color:#4a4a4a;"><span style="transform:scaleX(1.0667)">18</span></div>
<div class="t" style="left:384.20px;top:156.00px;font-size:9.5px;color:#4a4a4a;"><span style="transform:scaleX(0.9600)">20</span></div>
<div class="t" style="left:412.20px;top:156.00px;font-size:9.5px;color:#4a4a4a;"><span style="transform:scaleX(0.9600)">22</span></div>
<div class="t" style="left:440.20px;top:156.00px;font-size:9.5px;color:#4a4a4a;"><span style="transform:scaleX(0.9600)">24</span></div>
<div class="t" style="left:468.20px;top:156.00px;font-size:9.5px;color:#4a4a4a;"><span style="transform:scaleX(0.9600)">26</span></div>
<div class="t" style="left:496.20px;top:156.00px;font-size:9.5px;color:#4a4a4a;"><span style="transform:scaleX(0.9600)">28</span></div>
<div class="t" style="left:524.20px;top:156.00px;font-size:9.5px;color:#4a4a4a;"><span style="transform:scaleX(0.9600)">30</span></div>
<div class="t" style="left:552.20px;top:156.00px;font-size:9.5px;color:#4a4a4a;"><span style="transform:scaleX(0.9600)">32</span></div>
<div class="t" style="left:580.20px;top:156.00px;font-size:9.5px;color:#4a4a4a;"><span style="transform:scaleX(0.9600)">34</span></div>
<div class="t" style="left:608.20px;top:156.00px;font-size:9.5px;color:#4a4a4a;"><span style="transform:scaleX(0.9600)">36</span></div>
<div class="t" style="left:636.20px;top:156.00px;font-size:9.5px;color:#4a4a4a;"><span style="transform:scaleX(0.9600)">38</span></div>
<div class="t" style="left:664.20px;top:156.00px;font-size:9.5px;color:#4a4a4a;"><span style="transform:scaleX(0.9600)">40</span></div>
<div class="t" style="left:692.20px;top:156.00px;font-size:9.5px;color:#4a4a4a;"><span style="transform:scaleX(0.9600)">42</span></div>
<div class="t" style="left:720.20px;top:156.00px;font-size:9.5px;color:#4a4a4a;"><span style="transform:scaleX(0.9600)">44</span></div>
<div class="t" style="left:748.20px;top:156.00px;font-size:9.5px;color:#4a4a4a;"><span style="transform:scaleX(0.9600)">46</span></div>
<div class="t" style="left:776.20px;top:156.00px;font-size:9.5px;color:#4a4a4a;"><span style="transform:scaleX(0.9600)">48</span></div>
<svg class="a" style="left:0;top:0" width="1078" height="190" viewBox="0 0 1078 190"><rect x="96" y="159" width="11" height="13" fill="#c6c6c6" stroke="none" stroke-width="1" /><path d="M98.5 162v7M98 162.5h7M100.5 162v7M98 164.5h7M102.5 162v7M98 166.5h7M104.5 162v7M98 168.5h7" fill="none" stroke="#8a8a8a" stroke-width="1" /><rect x="210" y="159" width="15" height="13" fill="#ececec" stroke="none" stroke-width="1" /><rect x="212" y="159" width="11" height="13" fill="#c6c6c6" stroke="none" stroke-width="1" /><path d="M214.5 162v7M214 162.5h7M216.5 162v7M214 164.5h7M218.5 162v7M214 166.5h7M220.5 162v7M214 168.5h7" fill="none" stroke="#8a8a8a" stroke-width="1" /><rect x="326" y="159" width="15" height="13" fill="#ececec" stroke="none" stroke-width="1" /><rect x="328" y="159" width="11" height="13" fill="#c6c6c6" stroke="none" stroke-width="1" /><path d="M330.5 162v7M330 162.5h7M332.5 162v7M330 164.5h7M334.5 162v7M330 166.5h7M336.5 162v7M330 168.5h7" fill="none" stroke="#8a8a8a" stroke-width="1" /><rect x="442" y="159" width="15" height="13" fill="#ececec" stroke="none" stroke-width="1" /><rect x="444" y="159" width="11" height="13" fill="#c6c6c6" stroke="none" stroke-width="1" /><path d="M446.5 162v7M446 162.5h7M448.5 162v7M446 164.5h7M450.5 162v7M446 166.5h7M452.5 162v7M446 168.5h7" fill="none" stroke="#8a8a8a" stroke-width="1" /><rect x="558" y="159" width="15" height="13" fill="#ececec" stroke="none" stroke-width="1" /><rect x="560" y="159" width="11" height="13" fill="#c6c6c6" stroke="none" stroke-width="1" /><path d="M562.5 162v7M562 162.5h7M564.5 162v7M562 164.5h7M566.5 162v7M562 166.5h7M568.5 162v7M562 168.5h7" fill="none" stroke="#8a8a8a" stroke-width="1" /><rect x="676" y="159" width="11" height="13" fill="#c6c6c6" stroke="none" stroke-width="1" /><path d="M678.5 162v7M678 162.5h7M680.5 162v7M678 164.5h7M682.5 162v7M678 166.5h7M684.5 162v7M678 168.5h7" fill="none" stroke="#8a8a8a" stroke-width="1" /><path d="M568.5 156.5h8v3l-4 4.500l-4 -4.500z" fill="#fff" stroke="#7d7d7d" stroke-width="1" /><path d="M572.500 166l4 4.500v3.500h-8v-3.500z" fill="#fff" stroke="#7d7d7d" stroke-width="1" /><rect x="568.5" y="174" width="8" height="6.5" fill="#fff" stroke="#7d7d7d" stroke-width="1" /><path d="M677 168l4 4v2.500h-8v-2.500z" fill="#fff" stroke="#7d7d7d" stroke-width="1" /></svg>
</body>
</html>
